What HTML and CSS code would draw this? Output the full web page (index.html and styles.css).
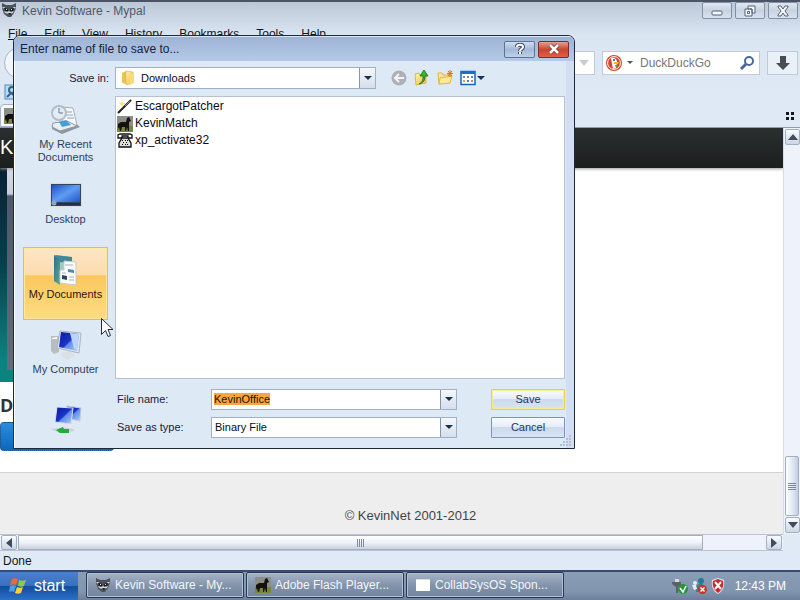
FILE: index.html
```html
<!DOCTYPE html>
<html lang="en">
<head>
<meta charset="utf-8">
<title>Kevin Software - Mypal</title>
<link rel="stylesheet" href="styles.css">
</head>
<body>
<svg class="defs" aria-hidden="true">
  <defs>
    <linearGradient id="screen" x1="0" y1="0" x2="1" y2="1"><stop offset="0" stop-color="#0a1c9c"/><stop offset=".5" stop-color="#1b34c8"/><stop offset=".55" stop-color="#5f8bea"/><stop offset="1" stop-color="#b6d2fa"/></linearGradient>
    <linearGradient id="desk" x1="0" y1="0" x2="1" y2="1"><stop offset="0" stop-color="#1c50c4"/><stop offset=".5" stop-color="#5f9cf4"/><stop offset="1" stop-color="#1d55c8"/></linearGradient>
    <linearGradient id="folder" x1="0" x2="1" y2="1"><stop offset="0" stop-color="#fff3a8"/><stop offset="1" stop-color="#efc142"/></linearGradient>
    <linearGradient id="binder" x1="0" x2="1" y2="1"><stop offset="0" stop-color="#2b6d93"/><stop offset="1" stop-color="#5cab85"/></linearGradient>
    <symbol id="raccoon" viewBox="0 0 16 16">
      <path d="M1 1l4 2h6l4-2 0 5-2 5-3 4H7l-4-3-2-6z" fill="#4a5157"/>
      <path d="M1 5l3 0-1 2zM15 5l-3 0 1 2zM3 9l3 1 2-1 2 1 3-1-1 2-4 1-4-1z" fill="#cdd5da"/>
      <path d="M3 6l4 1v2l-3 0zM13 6L9 7v2l3 0zM7 11h3l-1 2z" fill="#14171a"/>
      <path d="M5 7h1v1H5zM10 7h1v1h-1z" fill="#fff"/>
    </symbol>
    <symbol id="horse" viewBox="0 0 16 16">
      <path fill="#8b8f88" d="M0 0h16v16H0z"/><path fill="#78853a" d="M0 10h16v6H0z"/>
      <path d="M4 6h5l1-4 2-1 2 4-2 1v9h-1l-1-4-1 4H8v-4H5l-1 4H3l-1-4-1 2V8z" fill="#15110f"/>
    </symbol>
  </defs>
</svg>

<main class="browser">
  <header class="titlebar">
    <svg class="icon16"><use href="#raccoon"/></svg>
    <h1>Kevin Software - Mypal</h1>
    <div class="window-buttons">
      <button aria-label="Minimize"><svg viewBox="0 0 16 12"><rect x="3" y="6" width="10" height="4" rx="1"/></svg></button>
      <button aria-label="Restore"><svg viewBox="0 0 16 12"><path d="M6 1h7v7h-3V4H6zM3 4h7v7H3z"/><path d="M5.500 6.500h2v2h-2z"/></svg></button>
      <button aria-label="Close"><svg viewBox="0 0 16 12"><path d="M3 1h3l2 3 2-3h3v1l-3 4 3 4v1h-3L8 8l-2 3H3v-1l3-4-3-4z"/></svg></button>
    </div>
  </header>
  <nav class="menubar">
    <button><u>F</u>ile</button><button><u>E</u>dit</button><button><u>V</u>iew</button><button>Hi<u>s</u>tory</button><button><u>B</u>ookmarks</button><button><u>T</u>ools</button><button><u>H</u>elp</button>
  </nav>
  <div class="navbar">
    <button class="back" aria-label="Back"></button>
    <div class="address"><svg viewBox="0 0 10 8"><path d="M0 1h10L5 7z" fill="#c9ccd0"/></svg></div>
    <div class="search">
      <svg class="icon16" viewBox="0 0 16 16"><circle cx="8" cy="8" r="8" fill="#d8432a"/><circle cx="8" cy="8" r="6.400" fill="none" stroke="#fff" stroke-width="1"/><path d="M5 3c3-1 6 1 6 4l-1 6-3 1-1-5z" fill="#fff"/><path d="M8 7l5 0-1 2H8z" fill="#f5bb24"/><circle cx="8" cy="5" r="1" fill="#234a76"/><path d="M9 10l3 0-2 3z" fill="#55a03a"/></svg>
      <svg class="tiny" viewBox="0 0 6 4"><path d="M0 0h6L3 3z" fill="#555"/></svg>
      <input type="search" aria-label="Search" placeholder="DuckDuckGo">
      <svg class="icon16" viewBox="0 0 16 16" fill="none" stroke="#4868a4"><circle cx="10" cy="6" r="4" stroke-width="2"/><path d="M7 9l-5 5" stroke-width="3"/></svg>
    </div>
    <button class="download" aria-label="Downloads"><svg class="icon16" viewBox="0 0 16 16"><path d="M5 1h6v7h4l-7 7-7-7h4z" fill="#484d55"/></svg></button>
  </div>
  <div class="bookmarks"><svg class="icon16" viewBox="0 0 16 16"><rect x="1" y="1" width="14" height="14" fill="#b9ddf5" stroke="#5487b8"/><circle cx="8" cy="6" r="3" fill="none" stroke="#31658f" stroke-width="2"/><path d="M3 13l4-4 5 4" fill="none" stroke="#31658f" stroke-width="2"/></svg></div>
  <div class="tabs">
    <div class="tab"><svg class="icon16"><use href="#horse"/></svg></div>
    <svg class="grid-icon" viewBox="0 0 8 8"><path d="M0 0h3v3H0zM5 0h3v3H5zM0 5h3v3H0zM5 5h3v3H5z" fill="#15171c"/></svg>
  </div>
  <div class="viewport">
    <div class="page">
      <div class="site-header">K</div>
      <div class="site-body">
        <div class="hero"><span class="hero-panel"></span></div>
        <h2>D</h2>
        <button class="site-button" aria-label="Download"></button>
      </div>
      <footer>© KevinNet 2001-2012</footer>
    </div>
    <div class="vscroll">
      <button aria-label="Scroll up"><svg viewBox="0 0 10 6"><path d="M5 0l5 6H0z"/></svg></button>
      <div class="vthumb"><i class="grip"></i></div>
      <button aria-label="Scroll down"><svg viewBox="0 0 10 6"><path d="M5 6L0 0h10z"/></svg></button>
    </div>
    <div class="hscroll">
      <button aria-label="Scroll left"><svg viewBox="0 0 6 10"><path d="M0 5l6-5v10z"/></svg></button>
      <div class="hthumb"><i class="grip"></i></div>
      <button aria-label="Scroll right"><svg viewBox="0 0 6 10"><path d="M6 5L0 0v10z"/></svg></button>
    </div>
  </div>
  <div class="status">Done</div>
</main>

<section class="dialog" role="dialog" aria-labelledby="dialog-title">
  <header class="dialog-title">
    <h2 id="dialog-title">Enter name of file to save to...</h2>
    <button class="help" aria-label="Help"><svg viewBox="0 0 12 12"><path d="M3 4c0-3 6-3 6 0 0 2-3 2-3 4M6 9v2" fill="none" stroke="#3a4a6a" stroke-width="4"/><path d="M3 4c0-3 6-3 6 0 0 2-3 2-3 4M6 9v2" fill="none" stroke="#fff" stroke-width="2"/></svg></button>
    <button class="close" aria-label="Close dialog"><svg viewBox="0 0 12 12"><path d="M2 2l8 8M10 2l-8 8" stroke="#7a3030" stroke-width="4"/><path d="M2 2l8 8M10 2l-8 8" stroke="#fff" stroke-width="2.500"/></svg></button>
  </header>
  <form class="dialog-body">
    <label class="save-in" for="folder-select">Save in:</label>
    <div class="location">
      <div class="combo combo-folder">
        <svg class="icon16" viewBox="0 0 16 16"><path d="M2 3l4-2v13l-4-1z" fill="#e9c258"/><path d="M6 1l7 1v11l-7 2z" fill="url(#folder)" stroke="#d9b248" stroke-width=".6"/><path d="M10 4l4-1v10l-4 2z" fill="#f9dc77"/></svg>
        <select id="folder-select"><option>Downloads</option></select>
        <span class="arrow"><svg viewBox="0 0 8 4"><path d="M0 0h8L4 4z"/></svg></span>
      </div>
      <div class="tools">
        <button type="button" aria-label="Go back"><svg class="icon16" viewBox="0 0 16 16"><circle cx="8" cy="8" r="7.500" fill="#adb1b7"/><path d="M13 8H5M8 4L4 8l4 4" fill="none" stroke="#f4f4f4" stroke-width="2"/></svg></button>
        <button type="button" aria-label="Up one level"><svg class="icon16" viewBox="0 0 16 16"><path d="M1 4l4-1 1 2 6-1v9L2 15z" fill="url(#folder)" stroke="#dcb83e"/><path d="M5 14c4-2 4-5 4-8H6l4-6 4 6h-3c0 5-2 7-6 8z" fill="#34b52b" stroke="#176e19" stroke-width=".8"/></svg></button>
        <button type="button" aria-label="New folder"><svg class="icon16" viewBox="0 0 16 16"><path d="M1 3l4 0 1 2h7v8L2 14z" fill="url(#folder)" stroke="#e0b54a"/><path d="M3 8l12-2-2 7-11 1z" fill="#fdea9c" stroke="#e5b94d"/><path d="M13 0v7M10 3.500h6M11 1l4 5M15 1l-4 5" stroke="#e46a28"/></svg></button>
        <button type="button" class="views" aria-label="Views"><svg class="icon16" viewBox="0 0 16 16"><path d="M1 1.500h14v13H1z" fill="#fff" stroke="#1564b4" stroke-width="1.500"/><path d="M1 1h14v3H1z" fill="#1870c8"/><path d="M3 6h2v2H3zM7 6h2v2H7zM11 6h2v2h-2z" fill="#7488a4"/><path d="M3 10h2v2H3z" fill="#e0a33c"/><path d="M7 10h2v2H7z" fill="#4a7ccc"/><path d="M11 10h2v2h-2z" fill="#dc843a"/></svg><svg class="arrow8" viewBox="0 0 8 4"><path d="M0 0h8L4 4z" fill="#173355"/></svg></button>
      </div>
    </div>

    <nav class="places" aria-label="Places">
      <button type="button"><svg viewBox="0 0 32 32"><path d="M2 22l22-4 6 5-18 7-10-5z" fill="#8e969e"/><path d="M12 3l11 1 4 17-14 3z" fill="#f7fafc" stroke="#a4adb5"/><path d="M16 8h6M16 11h7M17 14h7" stroke="#8fa0b3"/><circle cx="9" cy="9" r="7" fill="#e2edf5" fill-opacity=".9" stroke="#b4bdc6" stroke-width="2"/><path d="M9 4v5h4" fill="none" stroke="#6d7883"/><path d="M3 19l14-2 10 5-17 5-8-4z" fill="#e9eef2" stroke="#8f99a2"/><path d="M9 18l7-2 5 5-9 2z" fill="#44a0d4"/></svg>My Recent Documents</button>
      <button type="button"><svg viewBox="0 0 32 32"><path d="M0 4h32v24H0z" fill="#d8dce0"/><path d="M1 5h30v22H1z" fill="#31465f"/><path d="M2 6h28v17H2z" fill="url(#desk)"/><path d="M2 24h28v2H2z" fill="#1c3350"/><circle cx="4" cy="24" r="2.500" fill="#8ea9bf"/></svg>Desktop</button>
      <button type="button" class="selected"><svg viewBox="0 0 32 32"><path d="M4 1l18 2v24L9 30l-5-3z" fill="#a5c7c0"/><path d="M4 1l6 5v25l-6-4z" fill="url(#binder)"/><path d="M5 1l17 2v6l-12-1z" fill="#3f879b"/><path d="M14 7l12 1v23l-16-2V16h4z" fill="#fbfcfc" stroke="#c3ccd0"/><path d="M15 11h8M12 19h4M19 23h5M19 26h5" stroke="#a4b3c2"/><path d="M18 15l6 1v3l-6-1z" fill="#5089ac"/><path d="M12 21l5 1v4l-5-1z" fill="#30475b"/></svg>My Documents</button>
      <button type="button"><svg viewBox="0 0 32 32"><path d="M1 7l8 0v16l-5 2-3-3z" fill="#b8bdc1"/><path d="M2 9l5-1v2H2z" fill="#fff"/><path d="M12 23l9-1 4 5-8 4-6-4z" fill="#dce0e3"/><path d="M10 2l21 2-2 20-22-5z" fill="#dfe6ee" stroke="#abb5bd"/><path d="M11 3l18 2-2 17-18-4z" fill="url(#screen)"/><path d="M20 4l9 1-2 16-3-1z" fill="#b9d5fa"/></svg>My Computer</button>
      <button type="button" class="network" aria-label="My Network Places"><svg viewBox="0 0 32 32"><path d="M17 2l14 2-1 13-15-3z" fill="url(#screen)" stroke="#c3ccdc"/><path d="M7 3l16 1-2 16-16-2z" fill="url(#screen)" stroke="#d7dfeb"/><path d="M0 25l9-1 15-1v4l-14 2z" fill="#c9d3d8"/><path d="M6 26l7-3 1 2h5v4h-9z" fill="#22ac3c"/><path d="M19 20l7 2-2 3-7-1z" fill="#e5e8ec"/></svg></button>
    </nav>

    <ul class="files">
      <li><svg class="icon16" viewBox="0 0 16 16"><path d="M1 14L14 1" stroke="#1d1d1d" stroke-width="2"/><path d="M8 7L13 2" stroke="#888" stroke-width="1"/><path d="M1 3l3 1 1-3 1 3 3 0-3 2-1 3-1-3z" fill="#f6e96b"/></svg>EscargotPatcher</li>
      <li><svg class="icon16"><use href="#horse"/></svg>KevinMatch</li>
      <li><svg class="icon16" viewBox="0 0 16 16"><path d="M1 5V2l2-1h10l2 1v3h-4V3H5v2z" fill="#fff" stroke="#111" stroke-width="1.300"/><path d="M5 5h6l3 5v4H2v-4z" fill="#ddd" stroke="#111" stroke-width="1.300"/><path d="M5 7h1v1H5zM8 7h1v1H8zM10 7h1v1h-1zM6 9h1v1H6zM9 9h1v1H9zM5 11h1v1H5zM8 11h1v1H8zM10 11h1v1h-1z" fill="#111"/></svg>xp_activate32</li>
    </ul>

    <div class="fields">
      <label for="file-name">File name:</label>
      <div class="combo"><input id="file-name" type="text" value="KevinOffice" autocomplete="off" spellcheck="false"><span class="arrow"><svg viewBox="0 0 8 4"><path d="M0 0h8L4 4z"/></svg></span></div>
      <button type="button" class="action primary">Save</button>
      <label for="file-type">Save as type:</label>
      <div class="combo"><select id="file-type"><option>Binary File</option></select><span class="arrow"><svg viewBox="0 0 8 4"><path d="M0 0h8L4 4z"/></svg></span></div>
      <button type="button" class="action">Cancel</button>
    </div>
  </form>
  <svg class="resize" viewBox="0 0 12 12"><path d="M9 1h2v2H9zM6 4h2v2H6zM9 4h2v2H9zM3 7h2v2H3zM6 7h2v2H6zM9 7h2v2H9zM0 10h2v2H0zM3 10h2v2H3zM6 10h2v2H6zM9 10h2v2H9z" fill="#b3c0d2"/></svg>
</section>

<svg class="cursor" viewBox="0 0 12 20"><path d="M.5.5v16l4-4 2.500 6 2.500-1-2.500-6h5z" fill="#fff" stroke="#222a3c"/></svg>

<footer class="taskbar">
  <button class="start"><svg viewBox="0 0 18 18"><path d="M3 2c2-1 4-1 6 0L7 8C5 7 3 7 1 8z" fill="#ee6a34"/><path d="M10 3c2 1 4 1 7 0l-2 6c-2 1-4 1-6 0z" fill="#8cc94c"/><path d="M1 9c2-1 4-1 6 0l-2 6c-2-1-3-1-5 0z" fill="#4c9ee6"/><path d="M8 10c2 1 4 1 6 0l-2 6c-2 1-4 1-6 0z" fill="#fad03e"/></svg>start</button>
  <div class="tasks">
    <button><svg class="icon16"><use href="#raccoon"/></svg>Kevin Software - My...</button>
    <button><svg class="icon16"><use href="#horse"/></svg>Adobe Flash Player...</button>
    <button><svg class="icon16" viewBox="0 0 16 16"><path d="M1 3h14v11H1z" fill="#fff"/><path d="M1 2h14v1H1z" fill="#d8dce2"/></svg>CollabSysOS Spon...</button>
  </div>
  <div class="tray">
    <svg class="icon16" viewBox="0 0 16 16"><path d="M3 1h4v4H3z" fill="#d5dae0"/><path d="M0 4h9v3L6 9v6H4V9L0 6z" fill="#5b6066"/><circle cx="11" cy="11" r="5" fill="#26963a"/><path d="M8 10l3 4 3-6" fill="none" stroke="#fff" stroke-width="1.500"/></svg>
    <svg class="icon16" viewBox="0 0 16 16"><circle cx="10" cy="3" r="3" fill="#217e91"/><circle cx="4" cy="5" r="2" fill="#dff0f3"/><path d="M5 8c3-3 7-3 9 1l-4 5H5z" fill="#39818e"/><path d="M1 7h4l1 4-3 1z" fill="#e4edf0"/><circle cx="11.500" cy="11.500" r="4.500" fill="#cc3529"/><path d="M9.500 9.500l4 4M13.500 9.500l-4 4" stroke="#fff" stroke-width="1.500"/></svg>
    <svg class="icon16" viewBox="0 0 16 16"><path d="M8 0l6 2c1 6-1 11-6 14C3 13 1 8 2 2z" fill="#e1e5e9"/><path d="M8 1l5 2c1 5-1 9-5 12-4-3-6-7-5-12z" fill="#cb2530"/><path d="M5 4l6 7M11 4l-6 7" stroke="#fff" stroke-width="2"/></svg>
    <time>12:43 PM</time>
  </div>
</footer>
<script src="script.js"></script>
</body>
</html>
```
FILE: styles.css
```css
* { box-sizing: border-box; }
body {
  margin: 0;
  height: 100vh;
  display: flex;
  flex-direction: column;
  overflow: hidden;
  font: 12px/16px "Liberation Sans", Arial, sans-serif;
  color: #101722;
}
button, input, select { font: inherit; color: inherit; margin: 0; padding: 0; border: 0; background: none; border-radius: 0; outline: 0; }
h1, h2, ul { margin: 0; padding: 0; font: inherit; list-style: none; }
svg { display: block; flex: none; }
.defs { position: absolute; width: 0; height: 0; }
.icon16 { width: 16px; height: 16px; }

/* browser window */
.browser { flex: 1; min-height: 0; display: flex; flex-direction: column; background: linear-gradient(#bcc8d6, #dbe6f3 34px, #dfeaf5 128px); border-top: 2px solid #4b5366; }
.titlebar { height: 24px; display: flex; align-items: flex-start; gap: 5px; padding: 0 2px 0 1px; color: #4d5a68; }
.titlebar h1 { flex: 1; padding-top: 1px; }
.window-buttons { display: flex; gap: 3px; }
.window-buttons button { width: 30px; height: 17px; border: 1px solid #8290a5; border-radius: 2px; background: linear-gradient(#dfe7f1, #c8d3e2 50%, #d8e2ee); display: flex; justify-content: center; align-items: center; }
.window-buttons svg { width: 16px; height: 12px; fill: #f5f8fb; stroke: #55627a; stroke-width: 1; }
.menubar { display: flex; align-items: flex-start; gap: 17px; padding-left: 8px; height: 22px; }
.navbar { height: 29px; display: flex; align-items: center; gap: 7px; padding: 0 2px 0 4px; }
.back { width: 32px; height: 32px; border-radius: 50%; border: 1px solid #aab6c5; background: #f1f5fa; }
.address { flex: 1; height: 24px; border: 1px solid #c0cad9; background: #fff; display: flex; align-items: center; justify-content: flex-end; padding-right: 5px; }
.address svg { width: 10px; height: 8px; }
.search { width: 158px; height: 24px; border: 1px solid #c0cad9; background: #fff; display: flex; align-items: center; padding: 0 4px 0 3px; gap: 5px; }
.search input { flex: 1; min-width: 0; width: 0; color: #777; padding-left: 2px; appearance: none; }
.search input::placeholder { color: #777; opacity: 1; }
.tiny { width: 6px; height: 4px; }
.download { width: 31px; height: 24px; border: 1px solid #c0cad9; background: #e9f0f8; display: flex; align-items: center; justify-content: center; }
.bookmarks { height: 27px; padding: 7px 4px; }
.tabs { height: 24px; border-bottom: 1px solid #939fae; display: flex; justify-content: space-between; align-items: center; padding-right: 6px; }
.tab { height: 23px; width: 170px; background: #f4f8fc; border: 1px solid #a8b4c4; border-radius: 4px 4px 0 0; padding: 3px; }
.grid-icon { width: 8px; height: 8px; }

.viewport { flex: 1; min-height: 0; display: grid; grid-template: 1fr 17px / 1fr 17px; }
.page { min-width: 0; min-height: 0; background: #fff; display: flex; flex-direction: column; overflow: hidden; }
.site-header { height: 40px; background: linear-gradient(#2b2f30, #1d1e1e); color: #fff; font-size: 20px; line-height: 38px; box-shadow: 0 1px 3px #9a9a9a; position: relative; }
.site-body { flex: 1; min-height: 0; }
.hero { height: 214px; width: 560px; background: linear-gradient(#0a1f33, #06404c 45%, #0b8380 90%); padding: 0 0 12px 7px; }
.hero-panel { display: block; height: 100%; background: linear-gradient(#d4dae0, #c7ced6 26px, #4f5968 28px, #646b7c); }
.site-body h2 { font: bold 18px/30px "Open Sans", sans-serif; color: #333; padding-top: 8px; height: 40px; }
.site-button { display: block; width: 114px; height: 29px; border-radius: 4px; border: 1px dotted #25496d; background: linear-gradient(#2a8ddf, #0f66b9); }
.page footer { height: 62px; background: #eee; border-top: 1px solid #d4d4d4; color: #444; font-size: 13px; display: flex; align-items: flex-end; justify-content: center; padding: 0 0 10px 38px; }

.vscroll, .hscroll { display: flex; background: #edf2fb; padding: 1px; }
.vscroll { flex-direction: column; border-left: 1px solid #d3dced; }
.vscroll button, .hscroll button { width: 15px; height: 16px; border: 1px solid #a3afc3; border-radius: 2px; background: linear-gradient(#fafcff, #ccd6e5); display: flex; align-items: center; justify-content: center; }
.vscroll svg { width: 10px; height: 6px; fill: #404b5e; }
.hscroll svg { width: 6px; height: 10px; fill: #404b5e; }
.vthumb { margin-top: auto; height: 60px; margin-bottom: 1px; border: 1px solid #a3afc3; border-radius: 2px; background: linear-gradient(90deg, #fff, #e4ebf6 50%, #c2cede); display: flex; align-items: center; justify-content: center; }
.vthumb .grip { width: 8px; height: 7px; background: repeating-linear-gradient(#7d899d 0 1px, transparent 1px 2px); }
.hscroll { padding: 0 1px; border-bottom: 1px solid #b8c4d5; border-top: 1px solid #b8c4d5; }
.hscroll button { height: 15px; width: 16px; }
.hthumb { flex: 0 1 685px; margin: 0 auto 0 1px; border: 1px solid #a3afc3; background: linear-gradient(#fff, #f0f2f9 50%, #c7cfde); display: flex; align-items: center; justify-content: center; }
.hthumb .grip { width: 8px; height: 8px; background: repeating-linear-gradient(90deg, #7d899d 0 1px, transparent 1px 2px); }
.status { height: 19px; padding: 2px 3px; background: #dfeaf6; }

/* save dialog */
.dialog { position: absolute; z-index: 2; left: 13px; top: 35px; width: 562px; max-width: calc(100vw - 26px); border: 1px solid #1b2a3c; border-radius: 7px 7px 0 0; background: #dee9f6; overflow: hidden; box-shadow: inset 1px 1px #fff, inset -8px 0 #d3def2; }
.dialog-title { height: 25px; display: flex; align-items: center; gap: 3px; padding: 0 5px 0 6px; background: linear-gradient(#9fb4d5, #b5c9e8); border-top: 1px solid #dbe5f4; color: #14223b; }
.dialog-title h2 { flex: 1; }
.dialog-title button { width: 31px; height: 17px; border: 1px solid #60738f; border-radius: 2px; background: linear-gradient(#d0def2, #a3b8da 50%, #bed0ea); display: flex; align-items: center; justify-content: center; }
.dialog-title button.close { border-color: #7b2b2a; background: linear-gradient(#e3a092, #c94631 50%, #df6044); }
.dialog-title svg { width: 12px; height: 12px; }
.dialog-body { display: grid; grid-template: 22px 283px auto / 86px 1fr; gap: 7px 6px; padding: 6px 9px 10px; font-size: 11px; line-height: 13px; color: #15233c; }
.save-in { align-self: center; justify-self: end; }
.location { display: flex; align-items: center; gap: 15px; }
.combo { height: 22px; display: flex; align-items: center; position: relative; background: #fff; border: 1px solid #a1b0c6; }
.combo-folder { width: 261px; padding-left: 4px; gap: 2px; }
.combo input, .combo select { flex: 1; min-width: 0; height: 100%; appearance: none; padding-left: 3px; color: #0b0b12; }
.combo input { padding-left: 2px; caret-color: transparent; }
.combo .arrow { position: absolute; right: 0; top: 0; bottom: 0; width: 16px; border-left: 1px solid #8596b0; background: linear-gradient(#f5f8fc, #d4deeb); display: flex; align-items: center; justify-content: center; pointer-events: none; }
.arrow svg, .arrow8 { width: 8px; height: 4px; fill: #1e3049; }
input::selection { background: #f6a63c; color: #1c1404; }
.tools { display: flex; gap: 7px; }
.views { display: flex; align-items: center; gap: 1px; }
.places { grid-row: 2 / 4; height: 342px; overflow: hidden; display: flex; flex-direction: column; gap: 2px; margin-right: 1px; padding-top: 1px; }
.places button { flex: none; height: 73px; width: 85px; border: 1px solid transparent; padding: 6px 4px 0; display: flex; flex-direction: column; align-items: center; gap: 2px; color: #2b3f5c; }
.places svg { width: 32px; height: 32px; }
.places .selected { border-color: #e8bd4a; background: linear-gradient(#fde5c5, #fcdcae 38%, #fbc75d 39%, #fddc83); color: #301403; box-shadow: inset 0 0 0 1px #ffe89a; }
.places .network { height: 40px; }
.files { background: #fff; border: 1px solid #b6c2d3; padding: 1px; font-size: 12px; line-height: 17px; color: #0c0c12; }
.files li { display: flex; align-items: center; gap: 2px; }
.fields { display: grid; grid-template-columns: 90px 246px 1fr; gap: 6px 4px; padding: 2px 0 0 2px; align-items: center; }
.fields .combo { height: 21px; }
.action { justify-self: end; width: 74px; height: 21px; border: 1px solid #7f93b2; border-radius: 1px; background: linear-gradient(#fafcff, #e4edf8 45%, #ccdaeb 50%, #d9e4f2); color: #22375a; }
.action.primary { border-color: #e6d33b; box-shadow: inset 0 0 0 1px #f7ee94; }
.resize { position: absolute; right: 2px; bottom: 2px; width: 12px; height: 12px; }
.cursor { position: absolute; z-index: 3; left: 101px; top: 318px; width: 12px; height: 20px; }

/* taskbar */
.taskbar { height: 30px; border-top: 2px solid #3a4a70; background: linear-gradient(#8a9db5, #8195af 70%, #6c809c); display: flex; color: #fff; }
.start { width: 78px; padding-left: 9px; display: flex; align-items: center; gap: 7px; background: linear-gradient(#4c80cc, #3a70c2 48%, #124c9d 52%, #2d70c8); font-size: 16px; }
.start svg { width: 18px; height: 18px; }
.tasks { flex: 1; min-width: 0; display: flex; gap: 2px; padding: 0 8px 2px; }
.tasks button { flex: 0 1 158px; min-width: 0; overflow: hidden; white-space: nowrap; display: flex; align-items: center; gap: 4px; padding-left: 8px; border: 1px solid #283b56; border-radius: 2px; background: linear-gradient(#a7b4c8, #8394ab 50%, #71849e); box-shadow: inset 0 0 0 1px #b3bfcf; color: #f3f6fa; }
.tray { display: flex; align-items: center; gap: 3px; padding-right: 14px; }
.tray time { padding-left: 6px; }
```
FILE: script.js
```js
const fileName = document.getElementById("file-name");
fileName.focus({ preventScroll: true });
fileName.select();
```
